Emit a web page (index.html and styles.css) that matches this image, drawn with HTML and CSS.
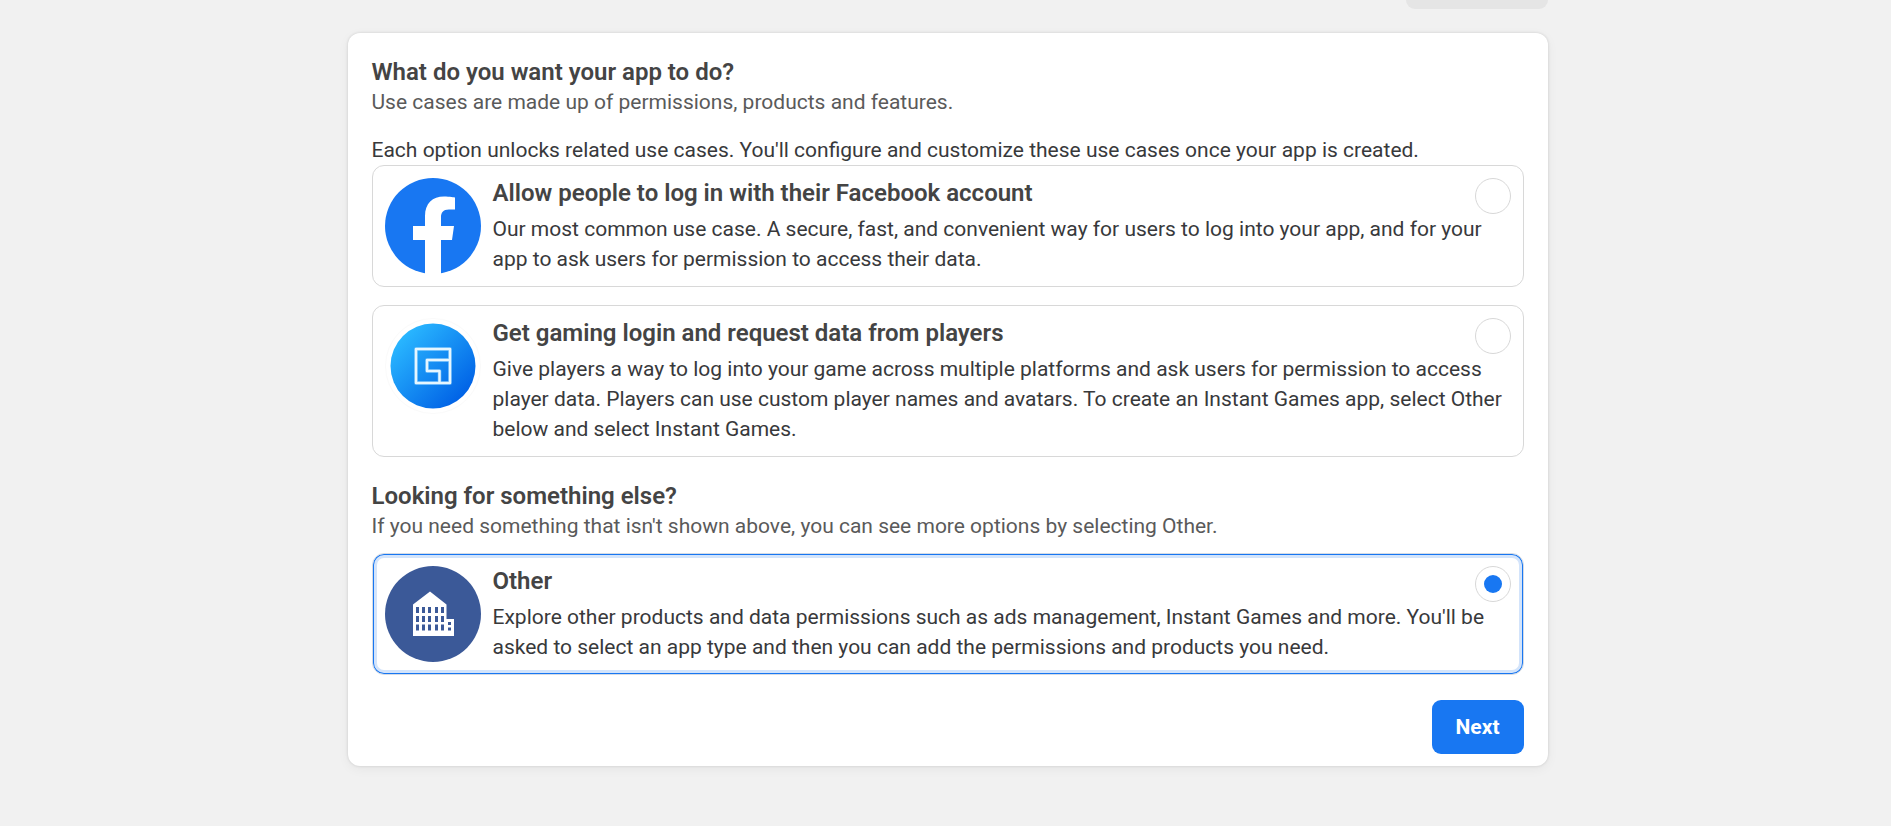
FILE: index.html
```html
<!DOCTYPE html>
<html lang="en">
<head>
<meta charset="utf-8">
<title>Create an app</title>
<link rel="stylesheet" href="styles.css">
</head>
<body>
<div class="page">
  <div class="toolbar"><div class="toolbar-end"></div></div>
  <form class="panel">
    <h2 class="heading">What do you want your app to do?</h2>
    <p class="subheading">Use cases are made up of permissions, products and features.</p>
    <p class="intro">Each option unlocks related use cases. You'll configure and customize these use cases once your app is created.</p>

    <div class="options">
      <label class="option" for="use-login">
        <svg class="option-icon" viewBox="0 0 96 96" aria-hidden="true">
          <circle cx="48" cy="48" r="48" fill="#1877f2"/>
          <path fill="#fff" d="M40 96V62H28V48H40V38C40 25.500 47.500 18.500 59 18.500C64.500 18.500 70 19.500 70 19.500V31.500H64C58 31.500 56 35 56 39V48H69L67 62H56V96Z"/>
        </svg>
        <span class="option-body">
          <span class="option-head">
            <span class="option-title">Allow people to log in with their Facebook account</span>
            <input class="radio" type="radio" name="use-case" id="use-login">
          </span>
          <span class="option-text">Our most common use case. A secure, fast, and convenient way for users to log into your app, and for your app to ask users for permission to access their data.</span>
        </span>
      </label>

      <label class="option" for="use-gaming">
        <svg class="option-icon" viewBox="0 0 96 96" aria-hidden="true">
          <defs>
            <linearGradient id="gaming-fill" x1="0.15" y1="0.15" x2="0.85" y2="0.85">
              <stop offset="0" stop-color="#29b6ff"/>
              <stop offset="1" stop-color="#0163e6"/>
            </linearGradient>
          </defs>
          <circle cx="48" cy="48" r="47.500" fill="#fff" stroke="#fafafa"/>
          <circle cx="48" cy="48" r="42.500" fill="url(#gaming-fill)"/>
          <path fill="none" stroke="#7cc8ff" stroke-opacity="0.500" stroke-width="4" stroke-linejoin="round" d="M65 42V31H31V65H65V42H42V53H54.500V65"/>
          <path fill="none" stroke="#e6f6ff" stroke-width="2.500" stroke-linejoin="round" d="M65 42V31H31V65H65V42H42V53H54.500V65"/>
        </svg>
        <span class="option-body">
          <span class="option-head">
            <span class="option-title">Get gaming login and request data from players</span>
            <input class="radio" type="radio" name="use-case" id="use-gaming">
          </span>
          <span class="option-text">Give players a way to log into your game across multiple platforms and ask users for permission to access player data. Players can use custom player names and avatars. To create an Instant Games app, select Other below and select Instant Games.</span>
        </span>
      </label>
    </div>

    <h2 class="heading heading-second">Looking for something else?</h2>
    <p class="subheading">If you need something that isn't shown above, you can see more options by selecting Other.</p>

    <div class="options options-other">
      <label class="option option-selected" for="use-other">
        <svg class="option-icon" viewBox="0 0 96 96" aria-hidden="true">
          <circle cx="48" cy="48" r="48" fill="#3b5998"/>
          <path fill="#fff" d="M28 38.500L45 25.500L61.500 38.500V53H69V70H28Z"/>
          <path fill="#3b5998" d="M31 41h3v6h-3zM37 41h3v6h-3zM43 41h3v6h-3zM50 41h3v6h-3zM56 41h3v6h-3zM31 50h3v6h-3zM37 50h3v6h-3zM43 50h3v6h-3zM50 50h3v6h-3zM56 50h3v6h-3zM31 58.500h3v6h-3zM37 58.500h3v6h-3zM43 58.500h3v6h-3zM50 58.500h3v6h-3zM56 58.500h3v6h-3zM63 56h3v3h-3zM63 61.500h3v3h-3z"/>
        </svg>
        <span class="option-body">
          <span class="option-head">
            <span class="option-title">Other</span>
            <input class="radio" type="radio" name="use-case" id="use-other" checked>
          </span>
          <span class="option-text">Explore other products and data permissions such as ads management, Instant Games and more. You'll be asked to select an app type and then you can add the permissions and products you need.</span>
        </span>
      </label>
    </div>

    <div class="actions">
      <button class="next" type="button">Next</button>
    </div>
  </form>
</div>
</body>
</html>
```
FILE: styles.css
```css
* { box-sizing: border-box; }

body {
  margin: 0;
  background: #f1f1f1;
  color: #38393b;
  font-family: Roboto, "Liberation Sans", sans-serif;
  font-size: 21px;
  line-height: 30px;
}

.page {
  max-width: 1204px;
  margin: 0 auto;
  padding: 0 0 48px 4px;
}

.toolbar {
  display: flex;
  justify-content: flex-end;
}

.toolbar-end {
  width: 142px;
  height: 9px;
  border-radius: 0 0 9px 9px;
  background: #e5e5e5;
}

.panel {
  margin-top: 24px;
  padding: 24px 24px 12px;
  border-radius: 12px;
  background: #fff;
  box-shadow: 0 0 3px rgba(0, 0, 0, 0.14), 0 3px 12px rgba(0, 0, 0, 0.05);
}

.heading {
  margin: 0;
  color: #444;
  font-size: 24px;
  font-weight: 600;
  line-height: 30px;
}

.heading-second { margin-top: 24px; }

.subheading {
  margin: 0;
  color: #5a5a5a;
}

.intro { margin: 18px 0 0; }

.options {
  display: flex;
  flex-direction: column;
  gap: 18px;
}

.options-other { margin-top: 12px; }

.option {
  display: flex;
  align-items: flex-start;
  gap: 12px;
  padding: 12px;
  border: 1px solid #d8d8d8;
  border-radius: 12px;
}

.option-selected {
  border-color: #d5dbe4;
  box-shadow: inset 0 0 0 1px #1877f2, inset 0 0 0 4px #d3e4fb;
}

.option-icon {
  flex: none;
  width: 96px;
  height: 96px;
}

.option-body {
  flex: 1;
  min-width: 0;
}

.option-head {
  display: flex;
  align-items: flex-start;
  justify-content: space-between;
}

.option-title {
  color: #444;
  font-size: 24px;
  font-weight: 600;
}

.option-text { display: block; }

.radio {
  appearance: none;
  flex: none;
  display: grid;
  place-items: center;
  width: 36px;
  height: 36px;
  margin: 0;
  border: 1px solid #d8d8d8;
  border-radius: 50%;
  background: #fff;
}

.radio:checked::before {
  content: "";
  width: 18px;
  height: 18px;
  border-radius: 50%;
  background: #1877f2;
}

.actions {
  display: flex;
  justify-content: flex-end;
  margin-top: 25px;
}

.next {
  padding: 12px 24px;
  border: 0;
  border-radius: 9px;
  background: #1877f2;
  color: #fff;
  font: 700 21px/30px Roboto, "Liberation Sans", sans-serif;
}
```
